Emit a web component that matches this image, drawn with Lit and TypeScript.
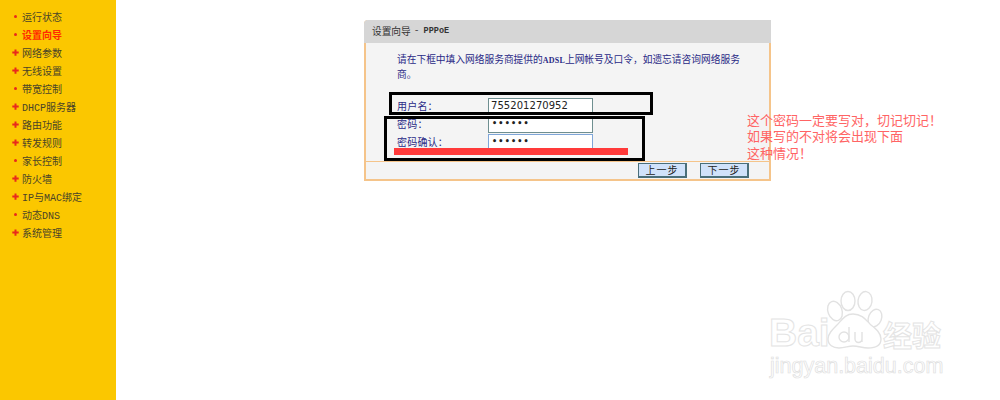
import { LitElement, html, css, svg } from "lit";
import { customElement } from "lit/decorators.js";

const MENU: [string, boolean, boolean][] = [
  ["运行状态", false, false],
  ["设置向导", true, false],
  ["网络参数", false, true],
  ["无线设置", false, true],
  ["带宽控制", false, false],
  ["DHCP服务器", false, true],
  ["路由功能", false, true],
  ["转发规则", false, true],
  ["家长控制", false, false],
  ["防火墙", false, true],
  ["IP与MAC绑定", false, true],
  ["动态DNS", false, false],
  ["系统管理", false, true],
];

@customElement("app-root")
export class AppRoot extends LitElement {
  static styles = css`
    :host {
      display: block;
      width: 1000px;
      height: 400px;
      overflow: hidden;
      background: #fff;
      font-family: "Noto Sans CJK SC", "Liberation Sans", sans-serif;
    }
    .page { position: relative; display: flex; width: 1000px; height: 400px; }
    .side {
      width: 116px;
      height: 400px;
      flex: none;
      background: #fbc700;
      padding-top: 7px;
      box-sizing: border-box;
      display: flex;
      flex-direction: column;
    }
    .item {
      height: 18px;
      display: flex;
      align-items: center;
      font-size: 10px;
      color: #4a4428;
      padding-left: 12px;
      gap: 3px;
      white-space: nowrap;
    }
    .item.on { color: #ff2a00; font-weight: 700; }
    .item.latin span { font-family: "Liberation Mono", "Noto Sans CJK SC", monospace; font-weight: 400; }
    .mark { width: 7px; height: 7px; flex: none; display: block; }
    .main { padding: 20px 0 0 248px; }
    .dialog {
      width: 407px;
      height: 161px;
      box-sizing: border-box;
      background: #f4f4f4;
      border: solid #f5c48a;
      border-width: 0 2px 2px 2px;
      border-radius: 4px 0 0 0;
      display: flex;
      flex-direction: column;
    }
    .head {
      height: 23px;
      flex: none;
      margin: 0 -2px;
      background: #d6d6d6;
      border-radius: 4px 0 0 0;
      display: flex;
      align-items: center;
      padding-left: 8px;
      padding-bottom: 2px;
      box-sizing: border-box;
      font-size: 9.7px;
      color: #333;
    }
    .head .dash { font-family: "Liberation Mono", monospace; margin: 0 4px 0 3px; }
    .head .ppp { font-family: "Liberation Mono", monospace; font-weight: 700; font-size: 8.5px; }
    .body { flex: 1; padding: 9px 26px 0 31px; }
    .intro {
      margin: 0;
      font-size: 9.72px;
      line-height: 15px;
      color: #2a2a86;
    }
    .intro b { font: 700 8px "Liberation Serif", serif; letter-spacing: .2px; }
    .rows { margin-top: 16px; display: flex; flex-direction: column; gap: 1px; }
    .row { display: flex; align-items: center; height: 17px; font-size: 10px; color: #2a2a86; }
    .row label { width: 91px; letter-spacing: .2px; padding-bottom: 2px; }
    .input {
      width: 105px;
      height: 17px;
      box-sizing: border-box;
      border: 1.5px solid #6f8f90;
      background: #fff;
      color: #222;
      font-family: "DejaVu Sans", sans-serif;
      font-size: 10px;
      line-height: 14px;
      padding-left: 2px;
      letter-spacing: .05px;
      overflow: hidden;
      white-space: nowrap;
    }
    .input.pw { font-size: 8px; font-weight: 700; letter-spacing: 1.2px; line-height: 13px; padding-left: 3px; }
    .input.focus { border-color: #7fa6d8; }
    .foot {
      height: 18px;
      flex: none;
      box-sizing: border-box;
      border-top: 1px solid #f5c48a;
      display: flex;
      justify-content: flex-end;
      gap: 13px;
      padding: 1px 20px 0 0;
      align-items: flex-start;
    }
    .btn {
      width: 49px;
      height: 15px;
      margin: 0;
      padding: 0;
      box-sizing: border-box;
      background: #d0e2fa;
      border: 1px solid #4a6f7a;
      border-bottom-width: 2px;
      border-right-width: 2px;
      font: 10px "Noto Sans CJK SC", sans-serif;
      color: #222;
      line-height: 12px;
      letter-spacing: 1px;
    }
    .box { position: absolute; border: 3px solid #000; box-sizing: border-box; }
    .box.a { left: 389px; top: 92px; width: 264px; height: 23px; }
    .box.b { left: 384px; top: 116px; width: 261px; height: 45px; }
    .bar { position: absolute; left: 394px; top: 148px; width: 234px; height: 7px; background: #ff3a3a; }
    .note {
      position: absolute;
      left: 747px;
      top: 111.5px;
      font-size: 13px;
      line-height: 16.5px;
      color: #ff6464;
      white-space: nowrap;
    }
    .wm { position: absolute; left: 760px; top: 290px; width: 190px; height: 90px; }
    .wm svg { position: absolute; left: 0; top: 0; }
    .wm-big, .wm-cn, .wm-url {
      position: absolute;
      color: #fff;
      -webkit-text-stroke: 1px #e4e4e4;
      white-space: nowrap;
    }
    .wm-big { left: 9px; top: 21px; font: 700 39px/44px "Liberation Sans", sans-serif; }
    .wm-cn { left: 123px; top: 25px; font-size: 29px; line-height: 38px; font-weight: 700; }
    .wm-url { left: 10px; top: 63px; font: 21.5px/26px "Liberation Sans", sans-serif; -webkit-text-stroke: .7px #e0e0e0; }
  `;

  private mark(big: boolean) {
    const p = big
      ? "M2.5 0.5h2v2h2.2v2h-2.2v2.2h-2v-2.2h-2.2v-2h2.2z"
      : "M2 3.5a1.5 1.5 0 1 0 3 0a1.5 1.5 0 1 0 -3 0z";
    return html`<svg class="mark" viewBox="0 0 7 7">${svg`<path d=${p} fill="#e8291c"/>`}</svg>`;
  }

  render() {
    return html`
      <div class="page">
        <nav class="side">
          ${MENU.map(
            ([t, on, big]) => html`<div class="item ${on ? "on" : ""} ${/[A-Z]/.test(t) ? "latin" : ""}">
              ${this.mark(big)}<span>${t}</span>
            </div>`
          )}
        </nav>
        <main class="main">
          <section class="dialog">
            <div class="head">设置向导<span class="dash">-</span><span class="ppp">PPPoE</span></div>
            <div class="body">
              <p class="intro">请在下框中填入网络服务商提供的<b>ADSL</b>上网帐号及口令，如遗忘请咨询网络服务商。</p>
              <div class="rows">
                <div class="row"><label>用户名：</label><div class="input">755201270952</div></div>
                <div class="row"><label>密码：</label><div class="input pw">••••••</div></div>
                <div class="row"><label>密码确认：</label><div class="input pw focus">••••••</div></div>
              </div>
            </div>
            <div class="foot">
              <button class="btn">上一步</button>
              <button class="btn">下一步</button>
            </div>
          </section>
        </main>
        <div class="box a"></div>
        <div class="box b"></div>
        <div class="bar"></div>
        <div class="note">这个密码一定要写对，切记切记！<br />如果写的不对将会出现下面<br />这种情况！</div>
        <div class="wm">
          <div class="wm-big">Bai</div>
          <svg width="190" height="90" viewBox="0 0 190 90" fill="#fff" stroke="#e2e2e2" stroke-width="1.4">
            <ellipse cx="75" cy="21" rx="7" ry="10" transform="rotate(-20 75 21)" />
            <ellipse cx="88" cy="11" rx="7" ry="9.5" />
            <ellipse cx="105" cy="11" rx="7" ry="9.5" transform="rotate(8 105 11)" />
            <ellipse cx="115" cy="28" rx="6.5" ry="9" transform="rotate(22 115 28)" />
            <path d="M93 24c-8 0-11 6-16 11c-5 5-9 9-9 14c0 6 5 9 11 9c6 0 9-2 14-2c6 0 9 2 15 2c8 0 13-3 13-9c0-6-5-10-10-14c-5-5-9-11-18-11z" />
            <circle cx="84" cy="47" r="5" fill="none" />
            <path d="M89 37v15M95 42v7a3.5 3.5 0 0 0 7 0v-7M102 42v10" fill="none" />
          </svg>
          <div class="wm-cn">经验</div>
          <div class="wm-url">jingyan.baidu.com</div>
        </div>
      </div>
    `;
  }
}
